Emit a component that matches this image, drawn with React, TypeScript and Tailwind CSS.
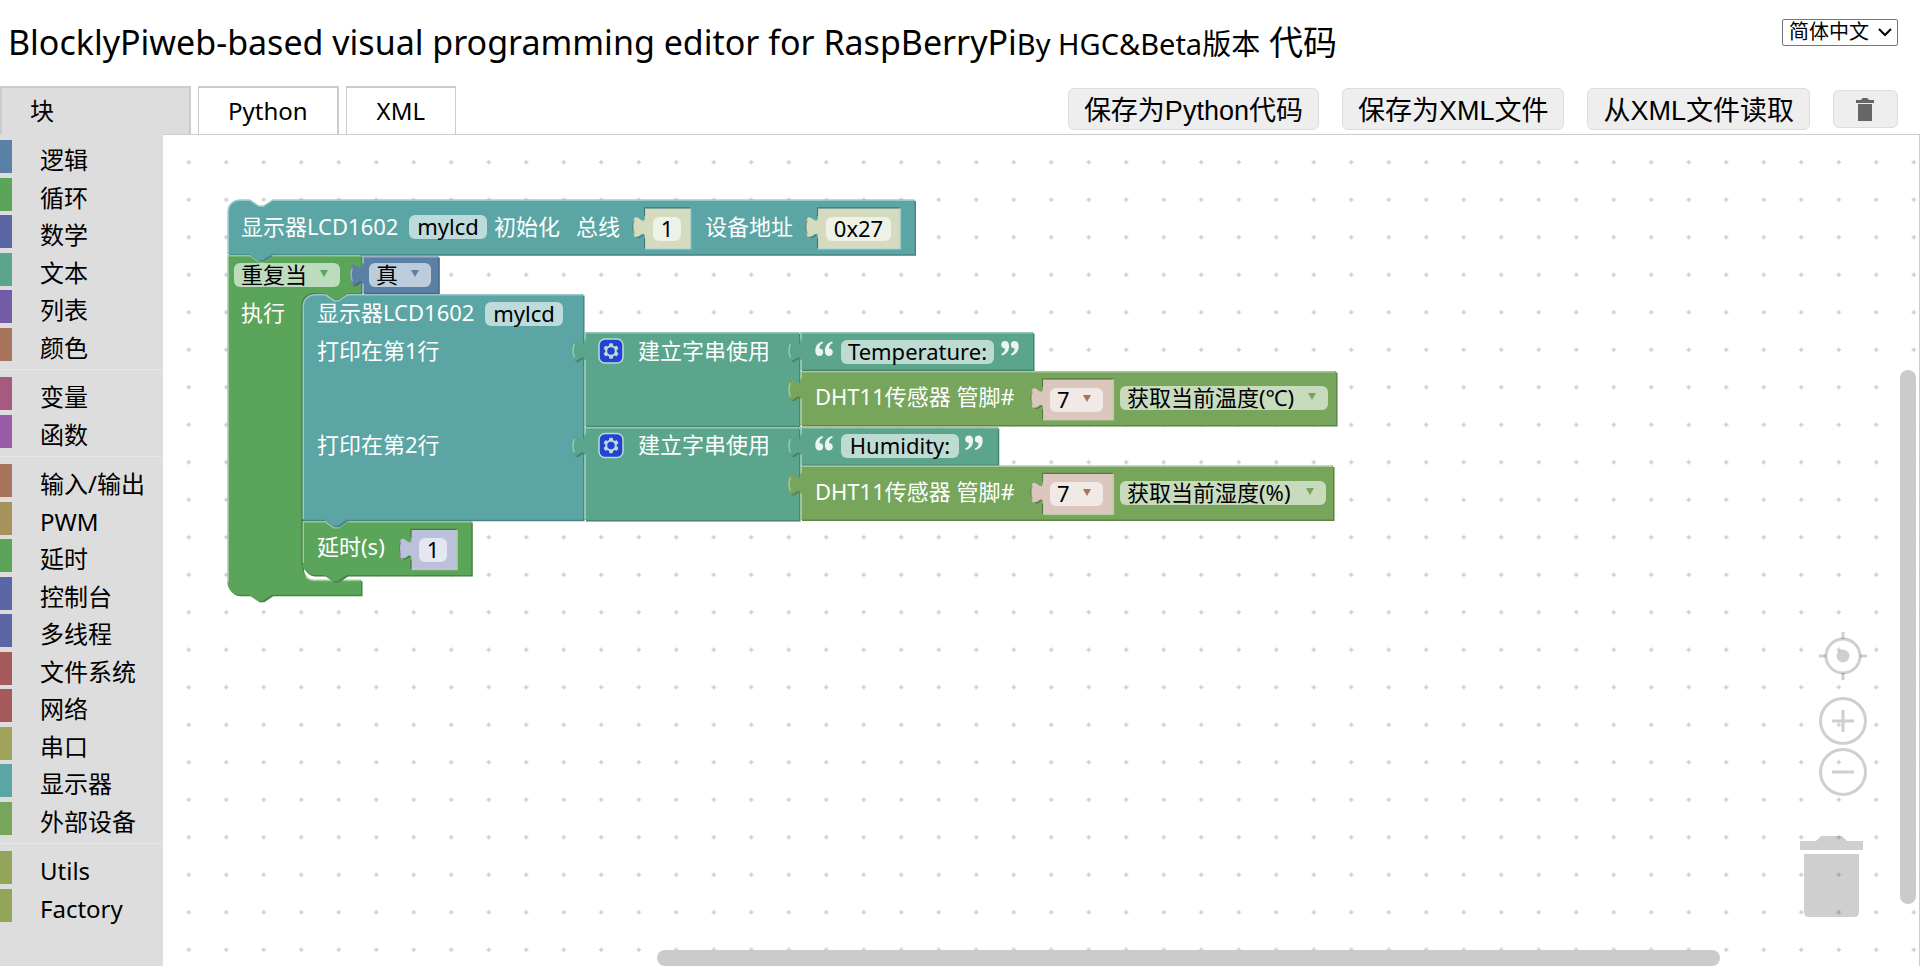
import type { ReactNode } from 'react';
import { useState } from 'react';
import clsx from 'clsx';

interface Category {
  name: string;
  color: string;
}

const categoryGroups: Category[][] = [
  [
    { name: '逻辑', color: 'border-[#5b80a5]' },
    { name: '循环', color: 'border-[#5ba55b]' },
    { name: '数学', color: 'border-[#5b67a5]' },
    { name: '文本', color: 'border-[#5ba58c]' },
    { name: '列表', color: 'border-[#745ba5]' },
    { name: '颜色', color: 'border-[#a5745b]' },
  ],
  [
    { name: '变量', color: 'border-[#a55b80]' },
    { name: '函数', color: 'border-[#995ba5]' },
  ],
  [
    { name: '输入/输出', color: 'border-[#a5745b]' },
    { name: 'PWM', color: 'border-[#a5935b]' },
    { name: '延时', color: 'border-[#5ba55b]' },
    { name: '控制台', color: 'border-[#5b67a5]' },
    { name: '多线程', color: 'border-[#5b67a5]' },
    { name: '文件系统', color: 'border-[#a55b5b]' },
    { name: '网络', color: 'border-[#a55b5b]' },
    { name: '串口', color: 'border-[#a1a55b]' },
    { name: '显示器', color: 'border-[#5ba5a5]' },
    { name: '外部设备', color: 'border-[#76a55b]' },
  ],
  [
    { name: 'Utils', color: 'border-[#93a55b]' },
    { name: 'Factory', color: 'border-[#93a55b]' },
  ],
];

// Block colours
const TEAL = '#5ba5a5';
const LOOP = '#5ba55b';
const LOGIC = '#5b80a5';
const TEXT = '#5ba58c';
const SENSOR = '#76a55b';

// Block outlines, in workspace units (one unit is 1.5px on screen)
const NOTCH = 'H15 l6,4 3,0 6,-4';
const NOTCH_BACK = 'H29.5 l-6,4 -3,0 -6,-4';

function stackPath(w: number, h: number, roundTop: boolean, roundBottom: boolean) {
  const start = roundTop ? 'M0,8 A8,8 0 0,1 8,0' : 'M0,0';
  const end = roundBottom ? `H8 a8,8 0 0,1 -8,-8` : 'H0';
  return `${start} ${NOTCH} H${w} V${h} ${NOTCH_BACK} ${end} z`;
}

function stackLight(w: number, h: number, roundTop: boolean, roundBottom: boolean) {
  const bottom = roundBottom ? h - 8 : h - 0.5;
  const start = roundTop ? `M.5,${bottom} V8 A7.5,7.5 0 0,1 8,.5` : `M.5,${bottom} V.5`;
  return `${start} H15 l6,4 3,0 6,-4 H${w - 0.5}`;
}

function valuePath(w: number, h: number) {
  return `M0,0 H${w} V${h} H0 V20 c0,-10 -8,8 -8,-7.5 s8,2.5 8,-7.5 z`;
}

function valueLight(w: number, h: number) {
  return `M.5,${h - 0.5} V18.5 M-6.8,17 q-1.6,-5 0,-9 M.5,5 V.5 H${w - 0.5}`;
}

interface ShapeProps {
  x: number;
  y: number;
  color: string;
  path: string;
  light?: string;
}

function Shape({ x, y, color, path, light }: ShapeProps) {
  return (
    <g transform={`translate(${x},${y}) scale(1.5)`}>
      <g transform="translate(1,1)">
        <path d={path} fill={color} />
        <path d={path} fill="#000" fillOpacity={0.2} />
      </g>
      <path d={path} fill={color} />
      {light && <path d={light} fill="none" stroke="#fff" strokeOpacity={0.38} />}
    </g>
  );
}

// Shadow block that sits inside an inline input
function InlineShape({ x, y, w, h, color }: { x: number; y: number; w: number; h: number; color: string }) {
  return (
    <g transform={`translate(${x},${y}) scale(1.5)`}>
      <path d={valuePath(w, h)} fill={color} />
      <path
        d={`M-.3,${h} V20 M-1,17.5 q-3.5,3 -5,1 M-7.2,17 q-1.6,-5 0,-9 M-.3,5 V-.4 H${w}`}
        fill="none"
        stroke="#000"
        strokeOpacity={0.28}
        strokeWidth={0.8}
      />
      <path d={`M0,${h + 0.4} H${w + 0.4} V0`} fill="none" stroke="#fff" strokeOpacity={0.45} />
    </g>
  );
}

function Gear({ x, y }: { x: number; y: number }) {
  return (
    <g transform={`translate(${x},${y}) scale(1.5)`}>
      <rect width="16" height="16" rx="4" fill="#2342d6" stroke="#b9dcd0" />
      <path
        d="m4.203,7.296 0,1.368 -0.92,0.677 -0.11,0.41 0.9,1.59 0.41,0.11 1.043,-0.457 1.187,0.683 0.127,1.134 0.3,0.3 1.8,0 0.3,-0.299 0.127,-1.138 1.185,-0.682 1.046,0.458 0.409,-0.11 0.9,-1.59 -0.11,-0.41 -0.92,-0.677 0,-1.366 0.92,-0.677 0.11,-0.41 -0.9,-1.59 -0.409,-0.109 -1.046,0.458 -1.185,-0.682 -0.127,-1.138 -0.3,-0.3 -1.8,0 -0.3,0.3 -0.126,1.135 -1.187,0.682 -1.043,-0.457 -0.41,0.11 -0.899,1.59 0.108,0.409z"
        fill="#bcdcd4"
      />
      <circle cx="8" cy="8" r="2.5" fill="#2342d6" />
    </g>
  );
}

function Quote({ x, y, flip }: { x: number; y: number; flip?: boolean }) {
  const mark = 'M7.5,0.5 C3,1.5 0.3,5 0.3,10 C0.3,13.2 2,15 4.4,15 C6.6,15 8.2,13.4 8.2,11.2 C8.2,9 6.7,7.6 4.4,7.6 C4.3,5.2 5.6,3.2 8.2,2 Z';
  return (
    <g transform={flip ? `translate(${x + 18},${y + 15}) rotate(180)` : `translate(${x},${y})`} fill="#fff" fillOpacity={0.88}>
      <path d={mark} />
      <path d={mark} transform="translate(9.6,0)" />
    </g>
  );
}

function BlockShapes() {
  const whilePath =
    `M0,0 ${NOTCH} H89 V25.5 H80 l-6,4 -3,0 -6,-4 h-7 a8,8 0 0,0 -8,8 V208.5 a8,8 0 0,0 8,8 H89 V226.5 ${NOTCH_BACK} H8 a8,8 0 0,1 -8,-8 z`;
  const whileLight =
    'M.5,218 V.5 H15 l6,4 3,0 6,-4 H88.5 M52,214.5 a8.5,8.5 0 0,0 6,2.5 H88.5';

  return (
    <svg className="absolute left-0 top-0 h-px w-px overflow-visible" aria-hidden="true">
      {/* LCD init */}
      <Shape x={0.5} y={0.5} color={TEAL} path={stackPath(458, 36.5, true, false)} light={stackLight(458, 36.5, true, false)} />
      <InlineShape x={418} y={9.5} w={30} h={26.5} color="#d5dbbf" />
      <InlineShape x={591} y={9.5} w={54.5} h={26.5} color="#d5dbbf" />

      {/* While loop */}
      <Shape x={0.5} y={56} color={LOOP} path={whilePath} light={whileLight} />
      <path d="M75,366 V107 a12,12 0 0,1 12,-12" fill="none" stroke="#000" strokeOpacity={0.25} strokeWidth={1.5} />
      <Shape x={0.5} y={0.5} color={TEAL} path="M14.5,36.5 l6,4 3,0 6,-4 z" />
      <Shape x={135.5} y={57} color={LOGIC} path={valuePath(50.5, 24.5)} light={valueLight(50.5, 24.5)} />

      {/* LCD print */}
      <Shape x={75.5} y={95} color={TEAL} path={stackPath(187, 150.5, true, false)} light={stackLight(187, 150.5, true, false)} />
      <Shape x={75.5} y={322} color={LOOP} path={stackPath(112.5, 36, false, true)} light={stackLight(112.5, 36, false, true)} />
      <Shape x={75.5} y={95} color={TEAL} path="M14.5,150.5 l6,4 3,0 6,-4 z" />
      <InlineShape x={184.5} y={331} w={30} h={26} color="#bcc1db" />

      {/* Text joins */}
      <Shape x={357.5} y={133} color={TEXT} path={valuePath(143, 62.5)} light={valueLight(143, 62.5)} />
      <Shape x={357.5} y={228} color={TEXT} path={valuePath(143, 62)} light={valueLight(143, 62)} />
      <Gear x={372} y={140} />
      <Gear x={372} y={234.5} />

      {/* Text and sensor values */}
      <Shape x={573.5} y={133} color={TEXT} path={valuePath(155, 25)} light={valueLight(155, 25)} />
      <Shape x={573.5} y={228} color={TEXT} path={valuePath(131.5, 25)} light={valueLight(131.5, 25)} />
      <Shape x={573.5} y={172} color={SENSOR} path={valuePath(357, 36)} light={valueLight(357, 36)} />
      <Shape x={573.5} y={266.5} color={SENSOR} path={valuePath(355, 36)} light={valueLight(355, 36)} />
      <Quote x={588} y={142} />
      <Quote x={774} y={142} flip />
      <Quote x={588} y={236.5} />
      <Quote x={738} y={236.5} flip />
      <InlineShape x={816} y={180.5} w={46.5} h={26.5} color="#dbc7be" />
      <InlineShape x={816} y={275} w={46.5} h={26.5} color="#dbc7be" />
    </svg>
  );
}

const labels = [
  { text: '显示器LCD1602', x: 14, y: 15 },
  { text: '初始化', x: 267, y: 15 },
  { text: '总线', x: 349, y: 15 },
  { text: '设备地址', x: 478, y: 15 },
  { text: '执行', x: 14, y: 101 },
  { text: '显示器LCD1602', x: 90, y: 101 },
  { text: '打印在第1行', x: 90, y: 139 },
  { text: '打印在第2行', x: 90, y: 233 },
  { text: '延时(s)', x: 90, y: 335 },
  { text: '建立字串使用', x: 411, y: 139 },
  { text: '建立字串使用', x: 411, y: 233 },
  { text: 'DHT11传感器 管脚#', x: 588, y: 185 },
  { text: 'DHT11传感器 管脚#', x: 588, y: 280 },
];

const textFields = [
  { name: 'LCD名称', value: 'mylcd', x: 182, y: 16, w: 78 },
  { name: '总线', value: '1', x: 426, y: 18, w: 28 },
  { name: '设备地址', value: '0x27', x: 599, y: 18, w: 65 },
  { name: '打印LCD名称', value: 'mylcd', x: 258, y: 103, w: 78 },
  { name: '第1行文本', value: 'Temperature:', x: 614, y: 141, w: 153 },
  { name: '第2行文本', value: 'Humidity:', x: 614, y: 235, w: 118 },
  { name: '延时秒数', value: '1', x: 192, y: 339, w: 28 },
];

const dropdowns = [
  { name: '循环条件', options: ['重复当', '重复直到'], x: 7, y: 64, w: 106, color: 'text-[#5ba55b]' },
  { name: '逻辑值', options: ['真', '假'], x: 142, y: 64, w: 62, color: 'text-[#5b80a5]' },
  { name: '温度管脚', options: ['7', '11', '12'], x: 823, y: 189, w: 53, color: 'text-[#a5745b]' },
  { name: '温度读数', options: ['获取当前温度(℃)', '获取当前湿度(%)'], x: 893, y: 187, w: 208, color: 'text-[#76a55b]' },
  { name: '湿度管脚', options: ['7', '11', '12'], x: 823, y: 283, w: 53, color: 'text-[#a5745b]' },
  { name: '湿度读数', options: ['获取当前湿度(%)', '获取当前温度(℃)'], x: 893, y: 282, w: 206, color: 'text-[#76a55b]' },
];

// The controls are taller than their pills so that glyphs are never clipped
function BlockFields() {
  return (
    <>
      {labels.map((label, index) => (
        <span
          key={index}
          className="absolute whitespace-nowrap text-[22px] leading-6 text-white"
          style={{ left: label.x, top: label.y }}
        >
          {label.text}
        </span>
      ))}
      {textFields.map((field) => (
        <div
          key={field.name}
          className="absolute flex h-6 items-center rounded-md bg-white/60"
          style={{ left: field.x, top: field.y, width: field.w }}
        >
          <input
            aria-label={field.name}
            defaultValue={field.value}
            spellCheck={false}
            className="h-9 w-full shrink-0 bg-transparent pb-[2px] text-center text-[22px] text-black outline-none"
          />
        </div>
      ))}
      {dropdowns.map((field) => (
        <div
          key={field.name}
          className={clsx('absolute flex h-6 items-center rounded-md bg-white/60', field.color)}
          style={{ left: field.x, top: field.y, width: field.w }}
        >
          <select
            aria-label={field.name}
            className="h-9 w-full shrink-0 appearance-none bg-transparent pb-[2px] pl-[7px] text-[22px] text-black outline-none"
          >
            {field.options.map((option) => (
              <option key={option}>{option}</option>
            ))}
          </select>
          <svg viewBox="0 0 8 7" className="pointer-events-none absolute right-3 top-[7px] h-[7px] w-2" aria-hidden="true">
            <path d="M0,0 H8 L4,7 z" fill="currentColor" />
          </svg>
        </div>
      ))}
    </>
  );
}

function ZoomButton({ label, className, children }: { label: string; className?: string; children: ReactNode }) {
  return (
    <button type="button" aria-label={label} className={clsx('block size-12', className)}>
      <svg viewBox="0 0 48 48" className="size-12" fill="none" stroke="#000" strokeOpacity={0.19} strokeWidth="3">
        {children}
      </svg>
    </button>
  );
}

function Workspace() {
  return (
    <main className="relative flex-1 overflow-hidden border-r border-t border-[#ccc] bg-white">
      <svg className="absolute inset-0 size-full" aria-hidden="true">
        <defs>
          <pattern id="grid" x="7" y="8.5" width="37.5" height="37.5" patternUnits="userSpaceOnUse">
            <path d="M16.5,18.75 h4.5 M18.75,16.5 v4.5" stroke="#ccc" strokeWidth="1.5" />
          </pattern>
        </defs>
        <rect width="100%" height="100%" fill="url(#grid)" />
      </svg>

      {/* Program blocks */}
      <div className="absolute left-16 top-16">
        <BlockShapes />
        <BlockFields />
      </div>

      {/* Zoom controls */}
      <div className="absolute bottom-[170px] right-[52px]">
        <ZoomButton label="居中" className="mb-[17px]">
          <circle cx="24" cy="24" r="17" />
          <path d="M24,0 V7 M24,41 V48 M0,24 H7 M41,24 H48" />
          <circle cx="24" cy="24" r="6.5" fill="#000" fillOpacity={0.19} stroke="none" />
        </ZoomButton>
        <ZoomButton label="放大" className="mb-[3px]">
          <circle cx="24" cy="24" r="22.5" />
          <path d="M13,24 H35 M24,13 V35" />
        </ZoomButton>
        <ZoomButton label="缩小">
          <circle cx="24" cy="24" r="22.5" />
          <path d="M13,24 H35" />
        </ZoomButton>
      </div>

      {/* Trash can */}
      <svg viewBox="0 0 63 81" className="absolute bottom-[49px] right-14 h-[81px] w-[63px]" fill="#000" fillOpacity={0.19} aria-hidden="true">
        <path d="M0,5 H16 L20,1 Q21,0 22,0 H41 Q42,0 43,1 L47,5 H63 V14 H0 z" />
        <path d="M4,18 H59 V76 Q59,81 54,81 H9 Q4,81 4,76 z" />
      </svg>

      {/* Scrollbars */}
      <div className="absolute right-[3px] top-[235px] bottom-[62px] w-4 rounded-full bg-[#cbcbcb]" />
      <div className="absolute bottom-0 left-[494px] right-[199px] h-4 rounded-full bg-[#cbcbcb]" />
    </main>
  );
}

function Toolbox() {
  return (
    <nav className="w-[163px] shrink-0 bg-[#ddd] pt-[6px]">
      {categoryGroups.map((group, index) => (
        <div key={index}>
          {index > 0 && <hr className="mb-[7px] mt-2 border-[#e5e5e5]" />}
          <div>
            {group.map((category) => (
              <button
                key={category.name}
                type="button"
                className={clsx(
                  'block h-[33px] w-full border-l-12 pl-7 text-left text-2xl leading-[39px] odd:mb-[5px] even:mb-1 last:mb-0',
                  category.color
                )}
              >
                {category.name}
              </button>
            ))}
          </div>
        </div>
      ))}
    </nav>
  );
}

const tabs = [
  { name: '块', className: 'w-[191px] border-2 px-7 text-left' },
  { name: 'Python', className: 'border border-t-2 border-r-2 px-[29px]' },
  { name: 'XML', className: 'border border-t-2 px-[30px]' },
];

const actions = ['保存为Python代码', '保存为XML文件', '从XML文件读取'];

export default function App() {
  const [activeTab, setActiveTab] = useState('块');

  return (
    <div className="flex h-screen flex-col bg-white font-['Noto_Sans','Noto_Sans_CJK_SC',sans-serif] text-black">
      <header className="flex h-[86px] shrink-0 items-start justify-between pl-2 pr-[22px]">
        <h1 className="mt-[19px] whitespace-nowrap text-[34px] leading-[46px]">
          BlocklyPiweb-based visual programming editor for RaspBerryPi
          <span className="text-[29px]">By HGC&amp;Beta版本</span> 代码
        </h1>
        <div className="relative mt-[19px]">
          <select
            aria-label="语言"
            defaultValue="简体中文"
            className="block h-[27px] w-[116px] appearance-none rounded-xs border border-[#767676] bg-white pb-[2px] pl-[6px] text-xl leading-6"
          >
            <option>简体中文</option>
            <option>English</option>
          </select>
          <svg
            viewBox="0 0 14 9"
            className="pointer-events-none absolute right-[6px] top-[9px] h-[9px] w-[14px]"
            fill="none"
            stroke="#000"
            strokeWidth="2"
            aria-hidden="true"
          >
            <path d="M1,1 L7,7 L13,1" />
          </svg>
        </div>
      </header>

      <div className="flex h-12 shrink-0 justify-between pr-[22px]">
        <div className="flex gap-[7px]" role="tablist">
          {tabs.map((tab) => (
            <button
              key={tab.name}
              type="button"
              role="tab"
              aria-selected={activeTab === tab.name}
              onClick={() => setActiveTab(tab.name)}
              className={clsx(
                'border-b-0 border-[#ccc] text-2xl',
                tab.className,
                activeTab === tab.name ? 'bg-[#ddd]' : 'bg-white'
              )}
            >
              {tab.name}
            </button>
          ))}
        </div>
        <div className="flex h-[46px] items-center gap-[23px] font-['Liberation_Sans','Noto_Sans_CJK_SC',sans-serif]">
          {actions.map((action) => (
            <button
              key={action}
              type="button"
              className="h-[42px] whitespace-nowrap rounded-md border border-[#ddd] bg-[#eee] px-[15px] pt-1 text-[27px] leading-9"
            >
              {action}
            </button>
          ))}
          <button
            type="button"
            aria-label="清空"
            className="flex h-[38px] w-[65px] items-center justify-center rounded-md border border-[#ddd] bg-[#eee] pr-[2px]"
          >
            <svg viewBox="0 0 18 23" className="h-[23px] w-[18px]" fill="#666" aria-hidden="true">
              <path d="M0,2 H5 L6.5,0 H11.5 L13,2 H18 V5 H0 z" />
              <path d="M2,6 H16 V23 H2 z" />
            </svg>
          </button>
        </div>
      </div>

      <div className="flex min-h-0 flex-1">
        <Toolbox />
        <Workspace />
      </div>
    </div>
  );
}
